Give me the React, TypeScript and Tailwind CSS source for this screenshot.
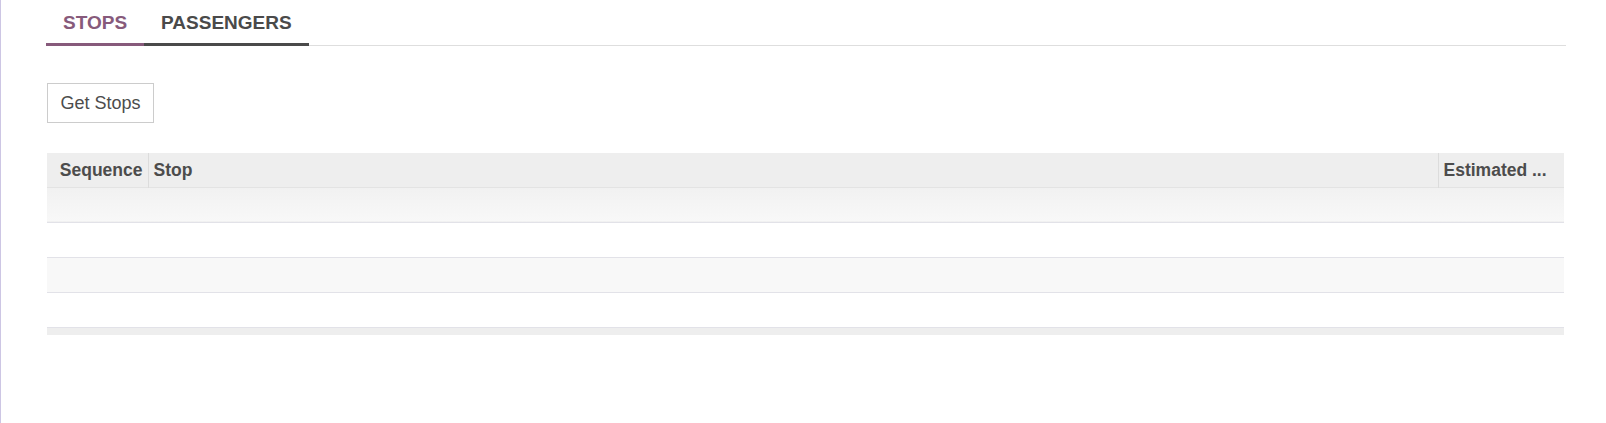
import React from "react";

const rows = [0, 1, 2, 3];

const Tab = ({ label, active }: { label: string; active?: boolean }) => (
  <div
    className={`-mb-px flex h-[46px] items-center border-b-[3px] px-[17px] pt-1 text-[19px] font-bold ${
      active ? "border-[#875a7b] text-[#875a7b]" : "border-[#4a4a4a] text-[#4a4a4a]"
    }`}
  >
    {label}
  </div>
);

const App = () => {
  return (
    <div className="min-h-[423px] border-l border-[#cdc6e4] bg-white font-['Liberation_Sans',Arial,sans-serif] text-[#4c4c4c]">
      <div className="pl-[45px] pr-[40px]">
        {/* Tabs */}
        <div className="flex border-b border-[#dedede]">
          <Tab label="STOPS" active />
          <Tab label="PASSENGERS" />
        </div>

        {/* Action */}
        <button className="ml-px mt-[37px] flex h-10 w-[107px] items-center justify-center border border-[#cccccc] bg-white text-[18px] text-[#4c4c4c]">
          Get Stops
        </button>

        {/* Stops list */}
        <div className="ml-px mr-[2px] mt-[30px]">
          <table className="w-full table-fixed border-collapse text-[17.5px]">
            <colgroup>
              <col className="w-[101px]" />
              <col />
              <col className="w-[126px]" />
            </colgroup>
            <thead>
              <tr className="h-[34px] border-b border-[#e3e3e3] bg-[#eeeeee] font-bold">
                <th className="px-[5px] text-right font-bold">Sequence</th>
                <th className="border-l border-[#dcdcdc] px-[5px] text-left font-bold">Stop</th>
                <th className="overflow-hidden whitespace-nowrap border-l border-[#dcdcdc] px-[5px] text-left font-bold">
                  Estimated ...
                </th>
              </tr>
            </thead>
            <tbody>
              {rows.map((r) => (
                <tr
                  key={r}
                  className={`h-[35px] border-b border-[#e2e2e8] ${
                    r === 0
                      ? "bg-gradient-to-b from-[#f1f1f1] to-[#f8f8f8]"
                      : r % 2 === 0
                        ? "bg-[#f8f8f8]"
                        : "bg-white"
                  }`}
                >
                  <td />
                  <td />
                  <td />
                </tr>
              ))}
            </tbody>
            <tfoot>
              <tr className="h-2 bg-[#eeeeee]">
                <td colSpan={3} />
              </tr>
            </tfoot>
          </table>
        </div>
      </div>
    </div>
  );
};

export default App;
